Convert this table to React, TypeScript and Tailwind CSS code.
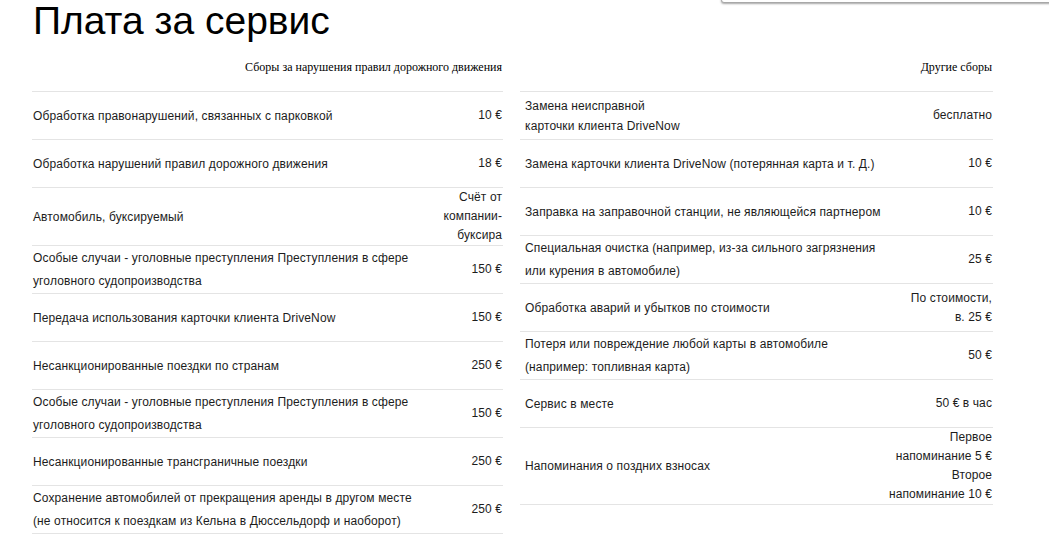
type Cell = string | string[];
type Row = { label: Cell; value: Cell; tight?: boolean };

const traffic: Row[] = [
  { label: 'Обработка правонарушений, связанных с парковкой', value: '10 €' },
  { label: 'Обработка нарушений правил дорожного движения', value: '18 €' },
  { label: 'Автомобиль, буксируемый', value: ['Счёт от', 'компании-', 'буксира'] },
  {
    label: ['Особые случаи - уголовные преступления Преступления в сфере', 'уголовного судопроизводства'],
    value: '150 €',
  },
  { label: 'Передача использования карточки клиента DriveNow', value: '150 €' },
  { label: 'Несанкционированные поездки по странам', value: '250 €' },
  {
    label: ['Особые случаи - уголовные преступления Преступления в сфере', 'уголовного судопроизводства'],
    value: '150 €',
  },
  { label: 'Несанкционированные трансграничные поездки', value: '250 €' },
  {
    label: [
      'Сохранение автомобилей от прекращения аренды в другом месте',
      '(не относится к поездкам из Кельна в Дюссельдорф и наоборот)',
    ],
    value: '250 €',
  },
];

const other: Row[] = [
  { label: ['Замена неисправной', 'карточки клиента DriveNow'], value: 'бесплатно', tight: true },
  { label: 'Замена карточки клиента DriveNow (потерянная карта и т. Д.)', value: '10 €' },
  { label: 'Заправка на заправочной станции, не являющейся партнером', value: '10 €' },
  {
    label: ['Специальная очистка (например, из-за сильного загрязнения', 'или курения в автомобиле)'],
    value: '25 €',
  },
  { label: 'Обработка аварий и убытков по стоимости', value: ['По стоимости,', 'в. 25 €'] },
  {
    label: ['Потеря или повреждение любой карты в автомобиле', '(например: топливная карта)'],
    value: '50 €',
  },
  { label: 'Сервис в месте', value: '50 € в час' },
  {
    label: 'Напоминания о поздних взносах',
    value: ['Первое', 'напоминание 5 €', 'Второе', 'напоминание 10 €'],
  },
];

function Lines({ cell }: { cell: Cell }) {
  const list = Array.isArray(cell) ? cell : [cell];
  return (
    <>
      {list.map((t, i) => (
        <div key={i} className="whitespace-nowrap">
          {t}
        </div>
      ))}
    </>
  );
}

function FeeTable({ title, rows, inset }: { title: string; rows: Row[]; inset?: boolean }) {
  return (
    <div className="flex flex-col">
      <div
        className="h-[50px] flex items-center justify-end border-b border-[#e4e4e4] pr-[1px] text-[12px] text-black"
        style={{ fontFamily: '"Liberation Serif", "Times New Roman", serif' }}
      >
        {title}
      </div>
      {rows.map((r, i) => (
        <div
          key={i}
          className={`flex items-center justify-between min-h-[48px] border-b border-[#e4e4e4] pr-[1px] ${inset ? 'pl-[5px]' : 'pl-[1px]'}`}
        >
          <div className={`tracking-[0.12px] pt-[1px] ${r.tight ? 'leading-[20px]' : 'leading-[23px]'}`}>
            <Lines cell={r.label} />
          </div>
          <div className="text-right leading-[19px] tracking-[0.1px]">
            <Lines cell={r.value} />
          </div>
        </div>
      ))}
    </div>
  );
}

export default function App() {
  return (
    <div
      className="relative w-[1049px] h-[559px] overflow-hidden bg-white text-[#1c1c1c] text-[12px]"
      style={{ fontFamily: '"Liberation Sans", Arial, sans-serif' }}
    >
      <div className="absolute left-[721px] top-[-12px] w-[340px] h-[15px] bg-white border border-[#a8a8a8] rounded-bl-[3px] shadow-[0_1px_2px_rgba(0,0,0,0.35)]" />
      <h1 className="pl-[33px] text-[39px] leading-[42px] text-black">Плата за сервис</h1>
      <div className="grid grid-cols-[471px_473px] gap-[17px] pl-[32px]">
        <FeeTable title="Сборы за нарушения правил дорожного движения" rows={traffic} />
        <FeeTable title="Другие сборы" rows={other} inset />
      </div>
    </div>
  );
}
